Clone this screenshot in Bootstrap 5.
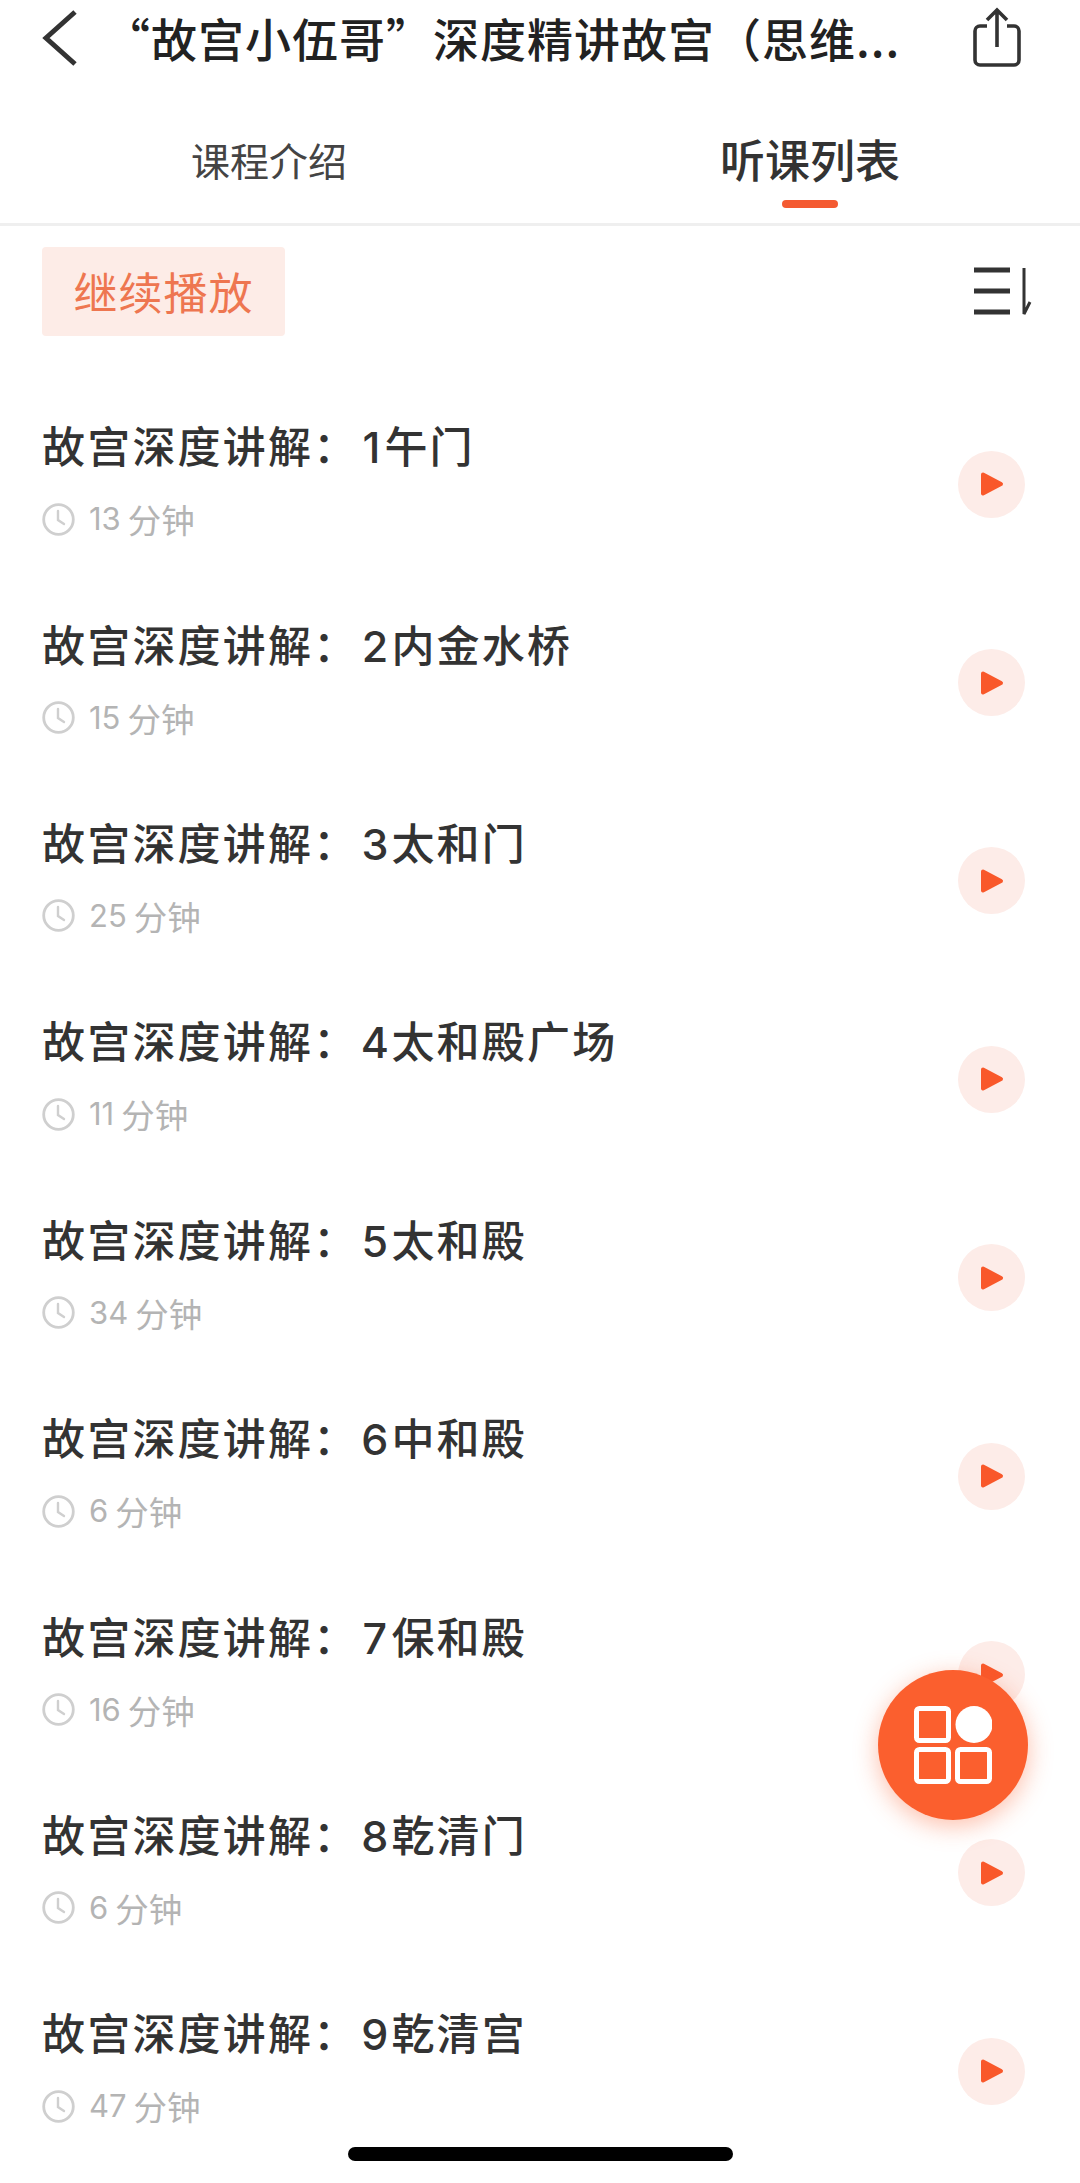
<!DOCTYPE html>
<html lang="zh"><head><meta charset="utf-8">
<link href="https://cdn.jsdelivr.net/npm/bootstrap@5.3.0/dist/css/bootstrap.min.css" rel="stylesheet">
<style>
html,body{height:2183px;overflow:hidden;background:#fff}
body{font-family:"Noto Sans CJK SC","Liberation Sans",sans-serif;color:#333;width:1080px}
.app-screen{width:1080px;height:2183px;overflow:hidden}
.top-bar{height:76px;padding:0 58px 0 42px}
.back-ic{width:36px;height:58px}
.title-txt{font-size:46px;font-weight:500;color:#222;letter-spacing:1px;line-height:74px;margin-left:26px;white-space:nowrap;width:800px;height:76px}
.share-ic{width:50px;height:62px}
.tab-row{height:150px;border-bottom:3px solid #efefef}
.tab-cell{width:50%;text-align:center;height:100%}
.tab-off{font-size:39px;color:#444;line-height:166px;padding-right:2px}
.tab-on{font-size:45px;font-weight:500;color:#333;line-height:166px}
.tab-bar{position:absolute;left:50%;margin-left:-28px;top:124px;width:56px;height:8px;border-radius:4px;background:#f45a31}
.tool-row{height:158px;padding:21px 48px 0 42px}
.resume-btn{width:243px;height:89px;background:#fdece7;color:#ee7650;font-size:44px;line-height:89px;text-align:center;border-radius:4px;letter-spacing:1px}
.sort-ic{width:60px;height:50px;margin-top:20px}
.lesson{height:198.4px;padding:0 55px 0 42px}
.lesson-text{margin-bottom:11px}
.lesson-name{font-size:43px;font-weight:500;color:#333;letter-spacing:2.2px;line-height:60px;white-space:nowrap}
.num-cell{display:inline-block;width:33px;text-align:center;font-family:Inter,"Liberation Sans",sans-serif;letter-spacing:0}
.num-narrow{width:26px}
.lesson-time{font-size:33.5px;color:#b4b4b4;line-height:44px;margin-top:20px}
.time-num{font-family:Inter,"Liberation Sans",sans-serif;font-size:31px;margin-right:7px}
.clock-ic{width:33px;height:33px;margin-right:14px}
.play-dot{width:67px;height:67px;border-radius:50%;background:#fdece8;margin-top:2px}
.play-ic{width:24px;height:26px}
.fab{position:absolute;left:878px;top:1670px;width:150px;height:150px;border-radius:50%;background:#fb5f2e;box-shadow:0 6px 24px rgba(251,95,46,.4)}
.fab svg{width:78px;height:78px}
.home-bar{position:absolute;left:348px;top:2147px;width:385px;height:14px;border-radius:7px;background:#000}
</style></head>
<body>
<svg width="0" height="0" class="position-absolute">
<symbol id="clock" viewBox="0 0 33 33"><circle cx="16.5" cy="16.5" r="14.8" fill="none" stroke="#cfcfcf" stroke-width="2.8"/><path d="M16 8v9l6 4" fill="none" stroke="#cfcfcf" stroke-width="2.4" stroke-linecap="round"/></symbol>
<symbol id="tri" viewBox="0 0 24 26"><path d="M3 3.5 21 13 3 22.500z" fill="#f9582a" stroke="#f9582a" stroke-width="4" stroke-linejoin="round"/></symbol>
</svg>
<div class="app-screen position-relative">
<div class="top-bar d-flex align-items-center">
<svg class="back-ic flex-shrink-0" viewBox="0 0 36 58"><path d="M33 3 4 29l29 26" fill="none" stroke="#333" stroke-width="5"/></svg>
<div class="title-txt flex-shrink-0">“故宫小伍哥”深度精讲故宫（思维...</div>
<svg class="share-ic flex-shrink-0 ms-auto" viewBox="0 0 50 62"><path d="M15 19H8a5 5 0 0 0-5 5v29a5 5 0 0 0 5 5h34a5 5 0 0 0 5-5V24a5 5 0 0 0-5-5h-7" fill="none" stroke="#333" stroke-width="3.600"/><path d="M25 40V4M15 13l10-10 10 10" fill="none" stroke="#333" stroke-width="3.600"/></svg>
</div>
<div class="tab-row d-flex">
<div class="tab-cell tab-off">课程介绍</div>
<div class="tab-cell tab-on position-relative">听课列表<span class="tab-bar"></span></div>
</div>
<div class="tool-row d-flex justify-content-between align-items-start">
<div class="resume-btn">继续播放</div>
<svg class="sort-ic" viewBox="0 0 60 50"><path d="M2 3h36M2 24h36M2 45h36" stroke="#333" stroke-width="5"/><path d="M52 1v46l6-12" fill="none" stroke="#333" stroke-width="3"/></svg>
</div>
<div class="lesson d-flex justify-content-between align-items-center"><div class="lesson-text"><div class="lesson-name">故宫深度讲解：<span class="num-cell num-narrow">1</span>午门</div><div class="lesson-time d-flex align-items-center"><svg class="clock-ic"><use href="#clock"/></svg><span class="time-num">13</span>分钟</div></div><div class="play-dot d-flex align-items-center justify-content-center"><svg class="play-ic"><use href="#tri"/></svg></div></div>
<div class="lesson d-flex justify-content-between align-items-center"><div class="lesson-text"><div class="lesson-name">故宫深度讲解：<span class="num-cell">2</span>内金水桥</div><div class="lesson-time d-flex align-items-center"><svg class="clock-ic"><use href="#clock"/></svg><span class="time-num">15</span>分钟</div></div><div class="play-dot d-flex align-items-center justify-content-center"><svg class="play-ic"><use href="#tri"/></svg></div></div>
<div class="lesson d-flex justify-content-between align-items-center"><div class="lesson-text"><div class="lesson-name">故宫深度讲解：<span class="num-cell">3</span>太和门</div><div class="lesson-time d-flex align-items-center"><svg class="clock-ic"><use href="#clock"/></svg><span class="time-num">25</span>分钟</div></div><div class="play-dot d-flex align-items-center justify-content-center"><svg class="play-ic"><use href="#tri"/></svg></div></div>
<div class="lesson d-flex justify-content-between align-items-center"><div class="lesson-text"><div class="lesson-name">故宫深度讲解：<span class="num-cell">4</span>太和殿广场</div><div class="lesson-time d-flex align-items-center"><svg class="clock-ic"><use href="#clock"/></svg><span class="time-num">11</span>分钟</div></div><div class="play-dot d-flex align-items-center justify-content-center"><svg class="play-ic"><use href="#tri"/></svg></div></div>
<div class="lesson d-flex justify-content-between align-items-center"><div class="lesson-text"><div class="lesson-name">故宫深度讲解：<span class="num-cell">5</span>太和殿</div><div class="lesson-time d-flex align-items-center"><svg class="clock-ic"><use href="#clock"/></svg><span class="time-num">34</span>分钟</div></div><div class="play-dot d-flex align-items-center justify-content-center"><svg class="play-ic"><use href="#tri"/></svg></div></div>
<div class="lesson d-flex justify-content-between align-items-center"><div class="lesson-text"><div class="lesson-name">故宫深度讲解：<span class="num-cell">6</span>中和殿</div><div class="lesson-time d-flex align-items-center"><svg class="clock-ic"><use href="#clock"/></svg><span class="time-num">6</span>分钟</div></div><div class="play-dot d-flex align-items-center justify-content-center"><svg class="play-ic"><use href="#tri"/></svg></div></div>
<div class="lesson d-flex justify-content-between align-items-center"><div class="lesson-text"><div class="lesson-name">故宫深度讲解：<span class="num-cell">7</span>保和殿</div><div class="lesson-time d-flex align-items-center"><svg class="clock-ic"><use href="#clock"/></svg><span class="time-num">16</span>分钟</div></div><div class="play-dot d-flex align-items-center justify-content-center"><svg class="play-ic"><use href="#tri"/></svg></div></div>
<div class="lesson d-flex justify-content-between align-items-center"><div class="lesson-text"><div class="lesson-name">故宫深度讲解：<span class="num-cell">8</span>乾清门</div><div class="lesson-time d-flex align-items-center"><svg class="clock-ic"><use href="#clock"/></svg><span class="time-num">6</span>分钟</div></div><div class="play-dot d-flex align-items-center justify-content-center"><svg class="play-ic"><use href="#tri"/></svg></div></div>
<div class="lesson d-flex justify-content-between align-items-center"><div class="lesson-text"><div class="lesson-name">故宫深度讲解：<span class="num-cell">9</span>乾清宫</div><div class="lesson-time d-flex align-items-center"><svg class="clock-ic"><use href="#clock"/></svg><span class="time-num">47</span>分钟</div></div><div class="play-dot d-flex align-items-center justify-content-center"><svg class="play-ic"><use href="#tri"/></svg></div></div>
<div class="fab d-flex align-items-center justify-content-center"><svg viewBox="0 0 78 78"><g fill="none" stroke="#fff" stroke-width="5"><rect x="2.500" y="2.500" width="32" height="32" rx="3"/><rect x="2.500" y="43.500" width="32" height="32" rx="3"/><rect x="43.500" y="43.500" width="32" height="32" rx="3"/></g><circle cx="60" cy="18.500" r="18.500" fill="#fff"/></svg></div>
<div class="home-bar"></div>
</div>
<script src="https://cdn.jsdelivr.net/npm/bootstrap@5.3.0/dist/js/bootstrap.bundle.min.js"></script>
</body></html>
